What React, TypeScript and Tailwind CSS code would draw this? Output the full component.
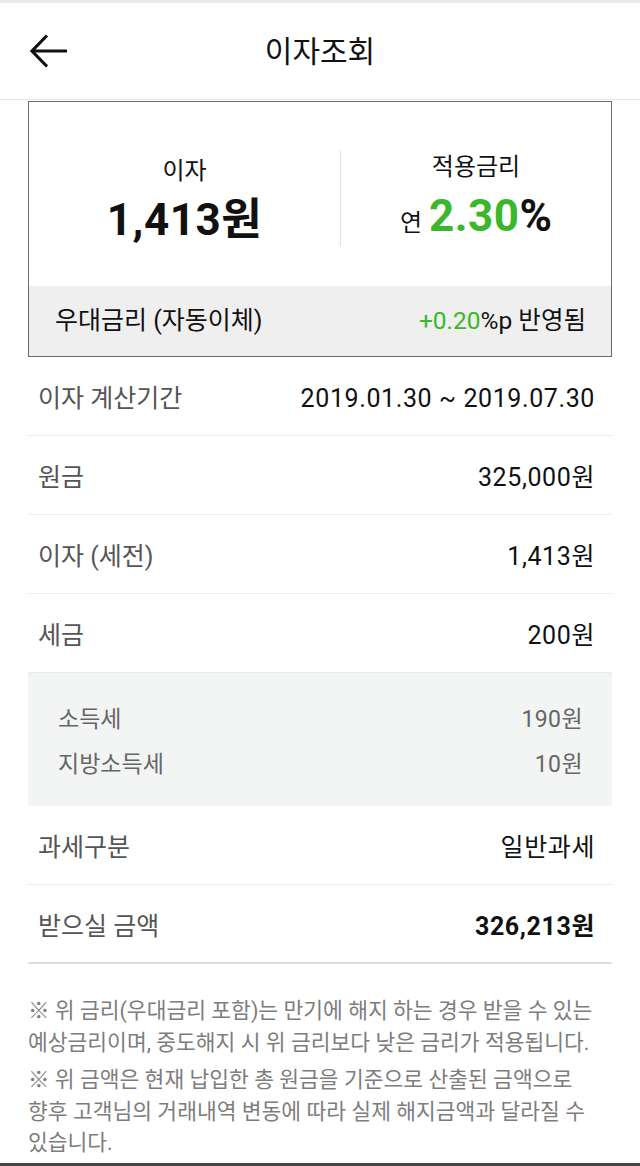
const font = { fontFamily: '"Roboto", "Noto Sans CJK KR", sans-serif' };

const rows = [
  { label: "이자 계산기간", value: "2019.01.30 ~ 2019.07.30" },
  { label: "원금", value: "325,000원" },
  { label: "이자 (세전)", value: "1,413원" },
  { label: "세금", value: "200원" },
];

const taxes = [
  { label: "소득세", value: "190원" },
  { label: "지방소득세", value: "10원" },
];

const Row = ({ label, value, bold }: { label: string; value: string; bold?: boolean }) => (
  <div className="flex h-[79px] items-center justify-between border-b border-[#ececec] pl-[10px] pr-[17px] pt-[6px]">
    <span className="text-[25px] text-[#555]">{label}</span>
    <span className={`text-[25px] tracking-[0.6px] text-[#111] ${bold ? "font-bold" : ""}`}>{value}</span>
  </div>
);

export default function App() {
  return (
    <div className="w-[640px] bg-white" style={font}>
      <div className="h-[3px] bg-[#e9e9e9]" />
      <header className="relative flex h-[97px] items-center justify-center border-b border-[#e6e6e6]">
        <svg
          className="absolute left-[29px] top-[30px]"
          width="40"
          height="36"
          viewBox="0 0 40 36"
          fill="none"
          stroke="#111"
          strokeWidth="3.2"
        >
          <path d="M38 18H3" />
          <path d="M18 2.5L3 18l15 15.5" />
        </svg>
        <h1 className="text-[30px] text-[#111]">이자조회</h1>
      </header>

      <div className="mx-[28px] mt-[1px] border border-[#6b6b6b]">
        <div className="flex h-[184px] items-center">
          <div className="flex w-[311px] flex-col items-center pt-[12px]">
            <span className="text-[24px] leading-[32px] text-[#111]">이자</span>
            <span className="mt-[7px] text-[44px] font-bold leading-[52px] tracking-[0.5px] text-[#111]">1,413원</span>
          </div>
          <div className="mt-[8px] h-[96px] w-px bg-[#e2e2e2]" />
          <div className="flex flex-1 flex-col items-center pt-[12px]">
            <span className="text-[24px] leading-[32px] text-[#111]">적용금리</span>
            <span className="mt-[7px] flex items-baseline leading-[52px]">
              <span className="mr-[7px] text-[24px] text-[#111]">연</span>
              <span className="text-[44px] font-bold tracking-[0.5px] text-[#3cb62a]">2.30</span>
              <span className="text-[44px] font-bold text-[#111]">%</span>
            </span>
          </div>
        </div>
        <div className="flex h-[70px] items-center justify-between bg-[#efefef] pl-[26px] pr-[25px]">
          <span className="text-[25px] text-[#111]">우대금리 (자동이체)</span>
          <span className="text-[24.5px] text-[#111]">
            <span className="text-[#3cb62a]">+0.20</span>%p 반영됨
          </span>
        </div>
      </div>

      <div className="mx-[28px]">
        {rows.map((r) => (
          <Row key={r.label} label={r.label} value={r.value} />
        ))}
        <div className="flex flex-col gap-[13px] bg-[#f3f4f4] pb-[25px] pl-[30px] pr-[29px] pt-[31px]">
          {taxes.map((t) => (
            <div key={t.label} className="flex justify-between text-[23px] leading-[32px] text-[#666]">
              <span>{t.label}</span>
              <span className="tracking-[0.4px]">{t.value}</span>
            </div>
          ))}
        </div>
        <Row label="과세구분" value="일반과세" />
        <div className="flex h-[79px] items-center justify-between border-b-2 border-[#dedede] pl-[10px] pr-[17px] pt-[6px]">
          <span className="text-[25px] text-[#555]">받으실 금액</span>
          <span className="text-[25px] font-bold tracking-[0.6px] text-[#111]">326,213원</span>
        </div>
      </div>

      <div className="flex flex-col gap-[6px] whitespace-nowrap px-[28px] pb-[4px] pt-[31px] text-[21.5px] leading-[31.5px] text-[#7d7d7d]">
        <p>
          ※ 위 금리(우대금리 포함)는 만기에 해지 하는 경우 받을 수 있는
          <br />
          예상금리이며, 중도해지 시 위 금리보다 낮은 금리가 적용됩니다.
        </p>
        <p>
          ※ 위 금액은 현재 납입한 총 원금을 기준으로 산출된 금액으로
          <br />
          향후 고객님의 거래내역 변동에 따라 실제 해지금액과 달라질 수
          <br />
          있습니다.
        </p>
      </div>
      <div className="h-[3px] bg-[#444]" />
    </div>
  );
}
